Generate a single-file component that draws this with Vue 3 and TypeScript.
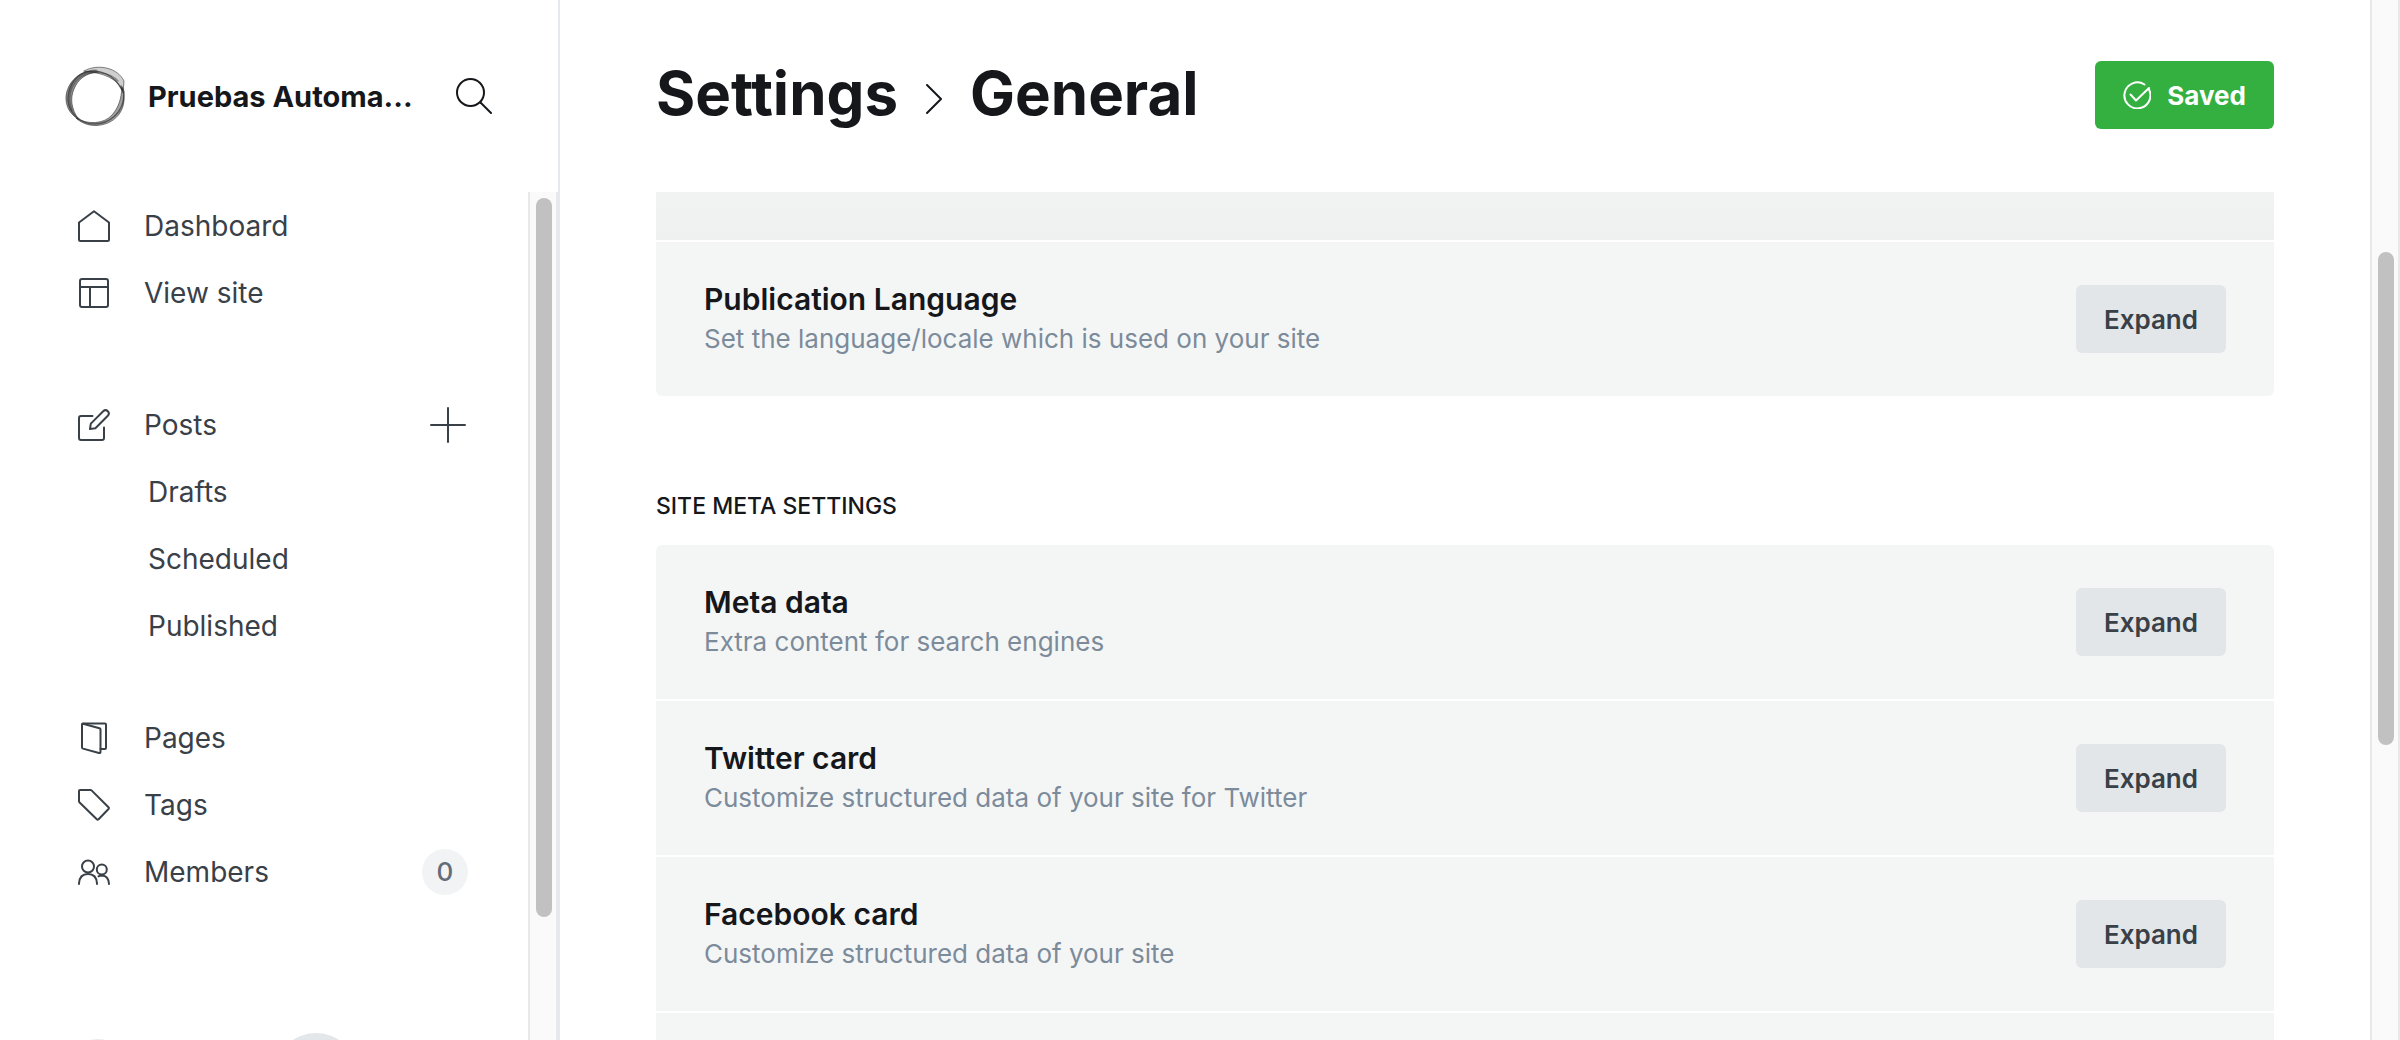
<script setup lang="ts">
interface NavItem {
  label: string
  icon?: string
  sub?: boolean
  add?: boolean
  count?: number
}

interface Setting {
  title: string
  description: string
}

const navGroups: NavItem[][] = [
  [
    { label: 'Dashboard', icon: 'home' },
    { label: 'View site', icon: 'site' },
  ],
  [
    { label: 'Posts', icon: 'edit', add: true },
    { label: 'Drafts', sub: true },
    { label: 'Scheduled', sub: true },
    { label: 'Published', sub: true },
  ],
  [
    { label: 'Pages', icon: 'pages' },
    { label: 'Tags', icon: 'tag' },
    { label: 'Members', icon: 'members', count: 0 },
  ],
]

const icons: Record<string, string[]> = {
  home: ['M1 12.5V29.5Q1 31 2.500 31H29.500Q31 31 31 29.500V12.500L16 1.200Z'],
  site: [
    'M4 2H28Q30 2 30 4V28Q30 30 28 30H4Q2 30 2 28V4Q2 2 4 2Z',
    'M2 10H30',
    'M12 10V30',
  ],
  edit: [
    'M14.500 7H3Q1 7 1 9V29Q1 31 3 31H24Q26 31 26 29V18.500',
    'M12 20L12.800 14.600L25.200 2.200Q27.500 0 29.800 2.200Q32 4.500 29.800 6.800L17.400 19.200Z',
  ],
  pages: [
    'M5 1.500H27Q28 1.500 28 2.500V26Q28 27 27 27H22.500',
    'M4 2.500V25.500Q4 26.300 5 26.600L21 31Q22.500 31.300 22.500 30V7.500Q22.500 6.500 21.500 6.200L5 1.800Q4 1.600 4 2.500Z',
  ],
  tag: ['M2 1H12.500Q13.200 1 13.800 1.600L30.500 18.300Q31.300 19.100 30.500 20L20.600 30.300Q19.700 31.200 18.800 30.300L1.600 13.500Q1 12.900 1 12.200V2Q1 1 2 1Z'],
  members: [
    'M10 4.500A6 6 0 1 1 10 16.500A6 6 0 1 1 10 4.500Z',
    'M1 28V27.500Q1.500 18 10 18Q18.500 18 19 27.500V28',
    'M23.800 8.500A5 5 0 1 1 23.800 18.500A5 5 0 1 1 23.800 8.500Z',
    'M20.500 20.300Q22 19.500 24 19.500Q30.500 19.800 31 28',
  ],
}

const siteMeta: Setting[] = [
  { title: 'Meta data', description: 'Extra content for search engines' },
  { title: 'Twitter card', description: 'Customize structured data of your site for Twitter' },
  { title: 'Facebook card', description: 'Customize structured data of your site' },
]
</script>

<template>
  <div class="app">
    <aside class="sidebar">
      <header class="brand">
        <svg class="logo" viewBox="0 0 64 64" aria-hidden="true">
          <g stroke="#222" stroke-opacity=".55" stroke-width="1">
            <path fill="#444" fill-opacity=".6" d="M32 6C13 6 1 22 2 36C3 46 8 51 15 56C7 45 6 34 10 25C14 15 22 9 34 8Z" />
            <path fill="#888" fill-opacity=".4" d="M20 7C34 -1 54 4 60 17L59 29C56 18 46 11 28 8Z" />
            <path fill="#555" fill-opacity=".55" d="M58 24C65 42 54 60 33 61.500C24 62 16 58 12 54C24 61 40 60 48 51C55 43 57 35 58 24Z" />
          </g>
          <g fill="none" stroke="#222" stroke-opacity=".6" stroke-width="1.500">
            <path d="M58 26C50 10 34 4 20 9C10 13 4 24 4 36C5 50 18 60 30 60C46 60 60 48 60 30C60 27 59 24 57 22" />
            <path d="M8 46C3 34 6 20 18 12C28 6 46 8 54 17" stroke-opacity=".4" />
          </g>
        </svg>
        <h2 class="brand-name">Pruebas Automa...</h2>
        <button class="icon-button" type="button" aria-label="Search">
          <svg class="icon-search" viewBox="0 0 36 36" aria-hidden="true">
            <circle cx="14.500" cy="14.500" r="13.500" />
            <path d="M24.500 24.500L35 35" />
          </svg>
        </button>
      </header>

      <div class="sidebar-body">
        <div class="sidebar-scroll">
          <nav class="nav">
            <ul v-for="(group, i) in navGroups" :key="i" class="nav-group">
              <li v-for="item in group" :key="item.label" class="nav-item">
                <a href="#" class="nav-link" :class="{ sub: item.sub }">
                  <svg v-if="item.icon" class="nav-icon" viewBox="0 0 32 32" aria-hidden="true">
                    <path v-for="d in icons[item.icon]" :key="d" :d="d" />
                  </svg>
                  <span>{{ item.label }}</span>
                </a>
                <button v-if="item.add" class="icon-button add" type="button" aria-label="New post">
                  <svg class="icon-plus" viewBox="0 0 36 36" aria-hidden="true">
                    <path d="M1 18H35M18 1V35" />
                  </svg>
                </button>
                <span v-if="item.count !== undefined" class="count">{{ item.count }}</span>
              </li>
            </ul>
          </nav>
          <div class="account" aria-hidden="true">
            <span class="avatar"></span>
            <span class="gear"></span>
          </div>
        </div>
        <div class="scrollbar" aria-hidden="true">
          <div class="thumb thumb-nav"></div>
        </div>
      </div>
    </aside>

    <main class="main">
      <header class="topbar">
        <h1 class="title">
          <a href="#">Settings</a>
          <svg class="chevron" viewBox="0 0 16 30" aria-hidden="true">
            <path d="M1 1L15 15L1 29" />
          </svg>
          <span>General</span>
        </h1>
        <button class="saved" type="button">
          <svg class="icon-check" viewBox="0 0 28 28" aria-hidden="true">
            <path d="M21.500 3.500A13 13 0 1 0 26 8.500" />
            <path d="M7.500 13.500L13 19.500L26 7" />
          </svg>
          <span>Saved</span>
        </button>
      </header>

      <div class="content">
        <section class="card first">
          <div class="tail"></div>
          <div class="row">
            <div>
              <h3>Publication Language</h3>
              <p>Set the language/locale which is used on your site</p>
            </div>
            <button class="expand" type="button">Expand</button>
          </div>
        </section>

        <h2 class="section-title">SITE META SETTINGS</h2>
        <section class="card">
          <div v-for="s in siteMeta" :key="s.title" class="row">
            <div>
              <h3>{{ s.title }}</h3>
              <p>{{ s.description }}</p>
            </div>
            <button class="expand" type="button">Expand</button>
          </div>
          <div class="row"></div>
        </section>
      </div>
    </main>

    <div class="scrollbar" aria-hidden="true">
      <div class="thumb thumb-page"></div>
    </div>
  </div>
</template>

<style>
body {
  background: #fff;
  overflow: hidden;
}
</style>

<style scoped>
.app {
  display: flex;
  height: 100vh;
  overflow: hidden;
  font-family: Inter, "Liberation Sans", sans-serif;
  color: #15171a;
}
.app *,
.app {
  box-sizing: border-box;
}
h1,
h2,
h3,
p,
ul {
  margin: 0;
  padding: 0;
}
a {
  color: inherit;
  text-decoration: none;
}
button {
  font-family: inherit;
  border: 0;
  cursor: pointer;
}
svg {
  display: block;
  flex: none;
  fill: none;
  stroke: currentColor;
  stroke-width: 2;
  stroke-linejoin: round;
  stroke-linecap: round;
}
.sidebar {
  display: flex;
  flex-direction: column;
  flex: 0 0 560px;
  border-right: 2px solid #e5e9ed;
}
.brand {
  display: flex;
  align-items: center;
  flex: none;
  height: 192px;
  padding: 0 66px 0 64px;
}
.logo {
  width: 64px;
  height: 64px;
}
.brand-name {
  flex: 1;
  margin-left: 20px;
  padding-top: 2px;
  font-size: 29px;
  line-height: 36px;
  font-weight: 700;
  white-space: nowrap;
}
.icon-button {
  padding: 0;
  background: none;
  color: inherit;
}
.icon-button.add {
  padding: 0 2px;
}
.icon-search,
.icon-plus {
  width: 36px;
  height: 36px;
}
.sidebar-body {
  display: flex;
  flex: 1;
  min-height: 0;
}
.sidebar-scroll {
  flex: 1;
  overflow: hidden;
}
.nav {
  display: flex;
  flex-direction: column;
  color: #394047;
}
.nav-group {
  list-style: none;
}
.nav-group:nth-child(2) {
  margin: 65px 0 45px;
}
.nav-item {
  display: flex;
  align-items: center;
  height: 67px;
  padding: 0 60px 0 78px;
}
.nav-link {
  display: flex;
  flex: 1;
  align-items: center;
  gap: 34px;
  font-size: 28px;
  line-height: 36px;
}
.nav-link.sub {
  padding-left: 70px;
}
.nav-icon {
  width: 32px;
  height: 32px;
}
.count {
  width: 46px;
  border-radius: 23px;
  background: #f1f3f4;
  color: #626d79;
  font-size: 26px;
  font-weight: 500;
  line-height: 46px;
  text-align: center;
}
.account {
  display: flex;
  gap: 144px;
  padding: 128px 0 0 66px;
}
.avatar {
  width: 64px;
  height: 64px;
  margin-top: 6px;
  border-radius: 50%;
  background: #ececec;
}
.gear {
  width: 84px;
  height: 84px;
  border-radius: 50%;
  background: #e3e7ea;
}
.scrollbar {
  flex: none;
  width: 30px;
  padding: 6px;
  padding-right: 4px;
  border: solid #e8e8e8;
  border-width: 0 2px;
  background: #fafafa;
}
.thumb {
  width: 16px;
  border-radius: 8px;
  background: #c1c1c1;
}
.thumb-nav {
  height: 86%;
}
.thumb-page {
  height: 48%;
  margin-top: 246px;
}
.main {
  display: flex;
  flex: 1;
  flex-direction: column;
  min-width: 0;
  padding: 0 96px;
}
.topbar {
  display: flex;
  flex: none;
  align-items: center;
  justify-content: space-between;
  height: 192px;
  padding-bottom: 2px;
}
.title {
  display: flex;
  align-items: center;
  padding-bottom: 4px;
  font-size: 60px;
  line-height: 72px;
  font-weight: 700;
}
.chevron {
  width: 16px;
  height: 30px;
  margin: 12px 28px 0;
}
.saved {
  display: flex;
  align-items: center;
  gap: 16px;
  height: 68px;
  padding: 0 28px;
  border-radius: 6px;
  background: #33b040;
  color: #fff;
  font-size: 26px;
  font-weight: 700;
}
.icon-check {
  width: 28px;
  height: 28px;
}
.content {
  flex: 1;
  min-height: 0;
  overflow: hidden;
}
.card {
  display: flex;
  flex-direction: column;
  gap: 2px;
  overflow: hidden;
  border-radius: 6px;
}
.card.first {
  border-radius: 0 0 6px 6px;
}
.tail {
  height: 48px;
  background: linear-gradient(#f1f3f2, #eff1f0);
}
.row {
  display: flex;
  align-items: center;
  justify-content: space-between;
  min-height: 154px;
  padding: 0 48px;
  background: #f4f6f6;
}
.row h3 {
  font-size: 30px;
  line-height: 40px;
  font-weight: 600;
}
.row p {
  font-size: 26px;
  line-height: 40px;
  color: #7c8b9a;
}
.expand {
  height: 68px;
  padding: 0 28px;
  border-radius: 6px;
  background: #e3e6e9;
  color: #394047;
  font-size: 26px;
  font-weight: 600;
}
.section-title {
  margin: 92px 0 21px;
  font-size: 23px;
  line-height: 36px;
  font-weight: 500;
}
</style>
